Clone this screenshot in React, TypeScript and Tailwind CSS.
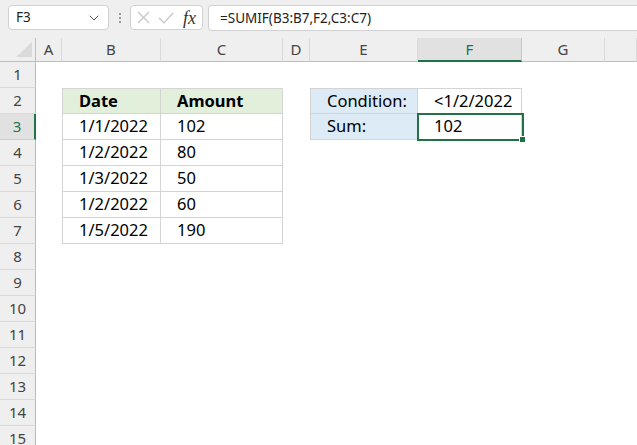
import { ChevronDown } from "lucide-react";

const COLS = ["A", "B", "C", "D", "E", "F", "G", "H"];
const ROWS = Array.from({ length: 15 }, (_, i) => i + 1);

type Cell = { text: string; bold?: boolean; fill?: string; table?: boolean; top?: boolean; left?: boolean };

// sheet contents keyed by "C3" etc.
const cells: Record<string, Cell> = {
  B2: { text: "Date", bold: true, fill: "bg-[#e2efda]", table: true, top: true, left: true },
  C2: { text: "Amount", bold: true, fill: "bg-[#e2efda]", table: true, top: true },
  B3: { text: "1/1/2022", table: true, left: true },
  C3: { text: "102", table: true },
  B4: { text: "1/2/2022", table: true, left: true },
  C4: { text: "80", table: true },
  B5: { text: "1/3/2022", table: true, left: true },
  C5: { text: "50", table: true },
  B6: { text: "1/2/2022", table: true, left: true },
  C6: { text: "60", table: true },
  B7: { text: "1/5/2022", table: true, left: true },
  C7: { text: "190", table: true },
  E2: { text: "Condition:", fill: "bg-[#ddebf7]", table: true, top: true, left: true },
  F2: { text: "<1/2/2022", table: true, top: true },
  E3: { text: "Sum:", fill: "bg-[#ddebf7]", table: true, left: true },
  F3: { text: "102", table: true },
};

function FormulaBar() {
  return (
    <div className="flex items-start h-[38px] pt-[5px] pl-2 bg-[#efefef] text-[13.5px] text-[#222]">
      {/* Name box */}
      <div className="flex items-center justify-between w-[101px] h-[25px] pl-[7px] pr-[6px] bg-white border border-[#d1d1d1] rounded-[4px]">
        <span>F3</span>
        <ChevronDown className="w-4 h-4 text-[#555]" strokeWidth={1.5} />
      </div>
      <div className="flex flex-col gap-[2px] items-center w-[21px] pt-[8px]">
        <span className="w-[2px] h-[2px] bg-[#9a9a9a]" />
        <span className="w-[2px] h-[2px] bg-[#9a9a9a]" />
        <span className="w-[2px] h-[2px] bg-[#9a9a9a]" />
      </div>
      {/* cancel / enter / fx */}
      <div className="flex items-center w-[73px] h-[25px] bg-white border border-[#d1d1d1] rounded-[4px] pl-[6px]">
        <svg width="13" height="13" viewBox="0 0 13 13" className="mr-[8px]">
          <path d="M1 1 L12 12 M12 1 L1 12" stroke="#c4c4c4" strokeWidth="1.2" fill="none" />
        </svg>
        <svg width="16" height="12" viewBox="0 0 16 12" className="mr-[9px]">
          <path d="M1 6 L6 11 L15 1" stroke="#c4c4c4" strokeWidth="1.2" fill="none" />
        </svg>
        <span className="italic text-[18px] leading-none text-[#333] font-['Liberation_Serif',serif]">fx</span>
      </div>
      {/* formula input */}
      <div className="flex items-center flex-1 h-[26px] ml-[5px] pl-[11px] bg-white border-y border-l border-[#d1d1d1] rounded-l-[4px]">
        =SUMIF(B3:B7,F2,C3:C7)
      </div>
    </div>
  );
}

function Sheet() {
  return (
    <div className="relative grid grid-cols-[36px_26px_99px_122px_27px_108px_104px_83px_1fr] grid-rows-[24px] auto-rows-[26px]">
      {/* corner */}
      <div className="flex items-end justify-end pr-[3px] pb-[4px] bg-[#efefef] border-r border-b border-[#bdbdbd]">
        <svg width="16" height="15" viewBox="0 0 16 15">
          <polygon points="16,0 16,15 0,15" fill="#dadada" />
        </svg>
      </div>
      {COLS.map((c) =>
        c === "F" ? (
          <div
            key={c}
            className="flex items-center justify-center bg-[#e1e1e1] border-r border-[#c8c8c8] border-b-2 border-b-[#217346] text-[#217346] text-[15px]"
          >
            {c}
          </div>
        ) : (
          <div
            key={c}
            className="flex items-center justify-center bg-[#efefef] border-r border-[#dadada] border-b border-b-[#bdbdbd] text-[#444] text-[15px]"
          >
            {c === "H" ? "" : c}
          </div>
        )
      )}

      {ROWS.map((r) => (
        <Row key={r} r={r} />
      ))}

      {/* F3 selection */}
      <div className="absolute left-[417px] top-[75px] w-[107px] h-[28px] border-2 border-[#217346] pointer-events-none">
        <span className="absolute -right-[4px] -bottom-[4px] w-[7px] h-[7px] bg-[#217346] border border-white" />
      </div>
    </div>
  );
}

function Row({ r }: { r: number }) {
  return (
    <>
      {r === 3 ? (
        <div className="flex items-center justify-center bg-[#e1e1e1] border-r-2 border-r-[#217346] border-b border-[#d0d0d0] text-[#217346] text-[15px]">
          {r}
        </div>
      ) : (
        <div className="flex items-center justify-center bg-[#efefef] border-r border-r-[#bdbdbd] border-b border-[#dadada] text-[#444] text-[15px]">
          {r}
        </div>
      )}
      {COLS.map((c) => {
        const cell = cells[c + r];
        if (!cell) return <div key={c} className="bg-white" />;
        return (
          <div
            key={c}
            className={[
              "flex items-center pl-4 text-[16.5px] text-black whitespace-nowrap overflow-hidden",
              "border-r border-b border-[#d4d4d4]",
              cell.top ? "border-t" : "",
              cell.left ? "border-l" : "",
              cell.fill ?? "bg-white",
              cell.bold ? "font-bold" : "",
            ].join(" ")}
          >
            {cell.text}
          </div>
        );
      })}
    </>
  );
}

export default function App() {
  return (
    <div className="w-[637px] h-[445px] overflow-hidden bg-white font-['Noto_Sans',sans-serif]">
      <FormulaBar />
      <Sheet />
    </div>
  );
}
